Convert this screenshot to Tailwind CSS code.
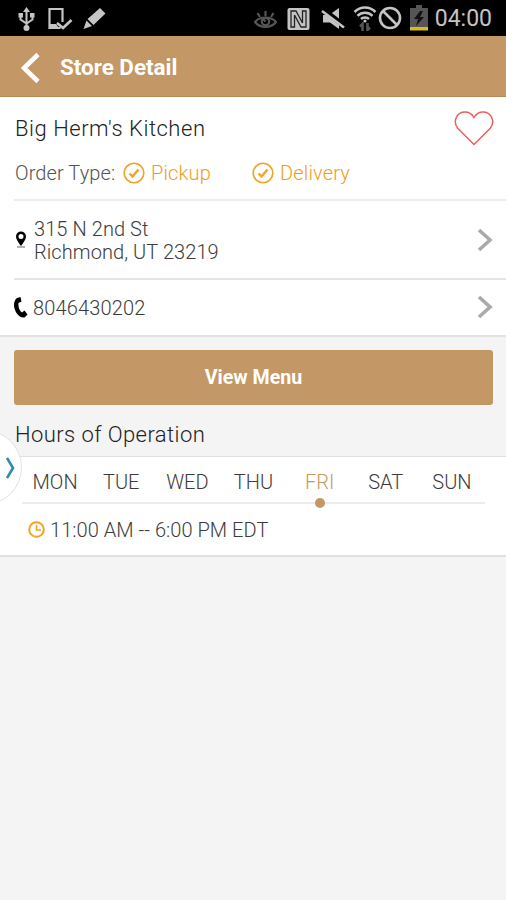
<!DOCTYPE html>
<html lang="en">
<head>
    <meta charset="UTF-8">
    <meta name="viewport" content="width=device-width, initial-scale=1.0">
    <script src="https://cdn.jsdelivr.net/npm/@tailwindcss/browser@4"></script>
    <title>Store Detail</title>
</head>
<body class="bg-[#f4f4f4] font-['Roboto','Noto_Sans',sans-serif] font-light text-[#3c3c3c]">
    <div class="relative h-[900px] overflow-hidden">
        <!-- Status bar -->
        <div class="flex h-9 items-center bg-black pl-[17px] pr-[14px] text-[#c4c4c4]">
            <svg class="mt-[2px] h-[26px] w-[19px]" viewBox="0 0 19 26" fill="none" stroke="currentColor" stroke-width="2">
                <path d="M9.500 4v18M3.500 9v4.500l6 4 6-4V9"/>
                <path d="M9.500 1l3.500 5H6zM1.500 7h4.500v4.500H1.500zM13 7h4.500v4.500H13z" fill="currentColor" stroke="none"/>
                <circle cx="9.500" cy="22" r="3" fill="currentColor" stroke="none"/>
            </svg>
            <svg class="ml-[12px] mt-[2px] h-6 w-[25px]" viewBox="0 0 25 24" fill="none" stroke="currentColor" stroke-width="2.200">
                <path d="M14.500 15V2H1.500v19h11"/>
                <path d="M2 17h6l3 4H2z" fill="currentColor" stroke="none"/>
                <path d="M9 16l6 5 8.500-8" stroke-width="2.800"/>
            </svg>
            <svg class="ml-[10px] h-6 w-6" viewBox="0 0 24 24" fill="currentColor">
                <path d="M17 2l5.500 5.500L10.500 19 4.500 13zM3.500 14.500l5.500 5.500-8.500 3z"/>
            </svg>
            <svg class="ml-auto mt-px h-6 w-[23px] text-[#555]" viewBox="0 0 23 24" fill="none" stroke="currentColor" stroke-width="2.200">
                <path d="M1 15c5-6 16-6 21 0-5 6.500-16 6.500-21 0z"/>
                <circle cx="11.500" cy="14.500" r="3.700"/>
                <path d="M11.500 4v5M3.500 6l2.500 4M19.500 6L17 10M11.500 14.500l-3-3"/>
            </svg>
            <svg class="ml-[10px] mt-[2px] h-6 w-[23px]" viewBox="0 0 23 24">
                <rect x="0.500" y="1" width="22" height="22" rx="2" fill="currentColor"/>
                <path d="M4 20V4h5l6.500 12V4h3.500v16h-5L7.500 8v12z" fill="none" stroke="#222" stroke-width="1.300"/>
            </svg>
            <svg class="ml-[11px] h-6 w-6" viewBox="0 0 24 24">
                <path d="M2 9h6l10-7v21l-9-6.500H2z" fill="currentColor"/>
                <path d="M1 2.500l23 18" stroke="#000" stroke-width="5"/>
                <path d="M1 5l22 16.500" stroke="currentColor" stroke-width="2.600"/>
            </svg>
            <svg class="ml-[8px] h-[26px] w-[24px]" viewBox="0 0 24 26" fill="none" stroke="currentColor" stroke-width="2.500">
                <path d="M1.500 7c6-6 15-6 21 0M4.500 10.800c4-4 11-4 15 0M8 14c2-2 6-2 8 0"/>
                <circle cx="12" cy="16" r="1.600" fill="currentColor" stroke="none"/>
                <path d="M9.500 26v-7l-2.500 2.500M14.500 18v7l2.500-2.500" stroke="#555" stroke-width="2.600"/>
            </svg>
            <svg class="ml-px h-6 w-6" viewBox="0 0 24 24" fill="none" stroke="currentColor" stroke-width="2.600">
                <circle cx="12" cy="12" r="10"/>
                <path d="M5 5l14 14"/>
            </svg>
            <svg class="ml-[8px] h-[26px] w-[18px]" viewBox="0 0 18 26">
                <path d="M6 0h6v3h6v20H0V3h6z" fill="#555"/>
                <path d="M10 6l-6 8h4l-2 7 8-9h-4l3-6z" fill="#111"/>
                <path d="M0 22h18v3.500H0z" fill="#d9bb14"/>
            </svg>
            <span class="ml-[7px] mt-px text-[23px] font-normal leading-none">04:00</span>
        </div>

        <!-- Title bar -->
        <header class="flex h-[61px] items-center border-b border-[#b98a58] bg-[#c39766] pl-[21px] text-white">
            <svg class="mt-1 h-[32px] w-[19px]" viewBox="0 0 19 32" fill="none" stroke="currentColor" stroke-width="4.600">
                <path d="M17 2.500L3 16l14 13.500"/>
            </svg>
            <h1 class="ml-[20px] mt-[3px] text-[22.400px] font-bold leading-none">Store Detail</h1>
        </header>

        <!-- Store info -->
        <section class="border-b-2 border-[#e2e2e2] bg-white pl-[14px]">
            <div class="flex h-[104px] flex-col border-b-2 border-[#ececec] pt-[13px]">
                <div class="flex h-[37px] items-center justify-between pl-px pr-[12px]">
                    <h2 class="mt-px text-[22px] font-light leading-none tracking-[0.530px] text-[#222]">Big Herm's Kitchen</h2>
                    <svg class="h-[36px] w-[40px]" viewBox="0 0 40 36" fill="none" stroke="#e8615c" stroke-width="1.500">
                        <path d="M20 33.500L3.500 17C-1.500 10 3 1 11 1c4.500 0 7 2 9 5.500C22 3 24.500 1 29 1c8 0 12.500 9 7.500 16z"/>
                    </svg>
                </div>
                <div class="mt-[14px] flex h-6 items-center text-[20px] leading-none">
                    <span class="w-[109px] pl-px tracking-[0.100px] text-[#555]">Order Type:</span>
                    <svg class="h-[22px] w-[22px]" viewBox="0 0 22 22" fill="none" stroke="#f2a324">
                        <circle cx="11" cy="11" r="9.800" stroke-width="1.600"/>
                        <path d="M6.500 11.500l3 3 6-7" stroke-width="2.400"/>
                    </svg>
                    <span class="ml-[6px] w-[101px] tracking-[0.150px] text-[#f29c18]">Pickup</span>
                    <svg class="h-[22px] w-[22px]" viewBox="0 0 22 22" fill="none" stroke="#f2a324">
                        <circle cx="11" cy="11" r="9.800" stroke-width="1.600"/>
                        <path d="M6.500 11.500l3 3 6-7" stroke-width="2.400"/>
                    </svg>
                    <span class="ml-[6px] tracking-[0.150px] text-[#f29c18]">Delivery</span>
                </div>
            </div>
            <div class="flex h-[79px] items-center border-b-2 border-[#e4e4e4] pr-[13px]">
                <svg class="h-[17px] w-[14px]" viewBox="0 0 14 17">
                    <path d="M3 16h8" stroke="#999" stroke-width="1.500"/>
                    <path d="M7 .5a5 5 0 0 0-5 5C2 9 7 15 7 15s5-6 5-9.500a5 5 0 0 0-5-5zm0 2.500a2.500 2.500 0 1 1 0 5 2.500 2.500 0 0 1 0-5z" fill="#000"/>
                </svg>
                <p class="ml-[6px] mt-[2px] text-[20px] leading-[23px] tracking-[0.080px]">315 N 2nd St<br>Richmond, UT 23219</p>
                <svg class="ml-auto h-6 w-[16px]" viewBox="0 0 16 24" fill="none" stroke="#aaa" stroke-width="3.600">
                    <path d="M2 2l11 10L2 22"/>
                </svg>
            </div>
            <div class="flex h-[55px] items-center pr-[13px]">
                <svg class="h-[21px] w-[14px]" viewBox="0 0 14 21">
                    <path d="M3 1l3.500-1 1 4.500-3 1.500C4 10 5.500 14 8 15.500l2.500-2 3 4-3 3C5 21.500 0 14 0 8 0 5 1 2.500 3 1z" fill="#000"/>
                </svg>
                <p class="ml-[5px] text-[20px] leading-none tracking-[0.150px]">8046430202</p>
                <svg class="ml-auto h-6 w-[16px]" viewBox="0 0 16 24" fill="none" stroke="#aaa" stroke-width="3.600">
                    <path d="M2 1l11 10L2 21"/>
                </svg>
            </div>
        </section>

        <div class="pl-[14px] pr-[13px] pt-[13px]">
            <button class="h-[55px] w-full rounded-[3px] bg-[#c39766] text-[19.600px] font-bold text-white">View Menu</button>
            <h2 class="mt-[19px] pl-px text-[22px] font-light leading-[22px] tracking-[0.420px] text-[#222]">Hours of Operation</h2>
        </div>

        <!-- Opening hours -->
        <section class="mt-[10px] h-[101px] border-b-2 border-t border-[#e0e0e0] bg-white px-[22px]">
            <ul class="grid h-[47px] w-[463px] grid-cols-7 items-center border-b-2 border-[#ececec] pt-[5px] text-center text-[20px] leading-none">
                <li>MON</li>
                <li>TUE</li>
                <li>WED</li>
                <li>THU</li>
                <li class="relative text-[#c39766]">FRI<span class="absolute -bottom-[16px] left-1/2 h-[10px] w-[10px] -translate-x-1/2 rounded-full bg-[#c39766]"></span></li>
                <li>SAT</li>
                <li>SUN</li>
            </ul>
            <div class="flex h-[51px] items-center pl-[6px]">
                <svg class="h-[17px] w-[17px]" viewBox="0 0 17 17" fill="none" stroke="#f2a324">
                    <circle cx="8.500" cy="8.500" r="7.300" stroke-width="2"/>
                    <path d="M8.500 4v5H13" stroke-width="1.600"/>
                </svg>
                <p class="ml-[5px] text-[20px] leading-none tracking-[0.040px]">11:00 AM -- 6:00 PM EDT</p>
            </div>
        </section>

        <!-- Side drawer handle -->
        <div class="absolute -left-[53px] top-[430px] flex h-[75px] w-[75px] items-center justify-end rounded-full border border-[#e2e2e2] bg-white pr-[6px]">
            <svg class="h-[22px] w-[9px]" viewBox="0 0 9 22" fill="none" stroke="#2b8cae" stroke-width="2.600">
                <path d="M1 1l6 10-6 10"/>
            </svg>
        </div>
    </div>
</body>
</html>
